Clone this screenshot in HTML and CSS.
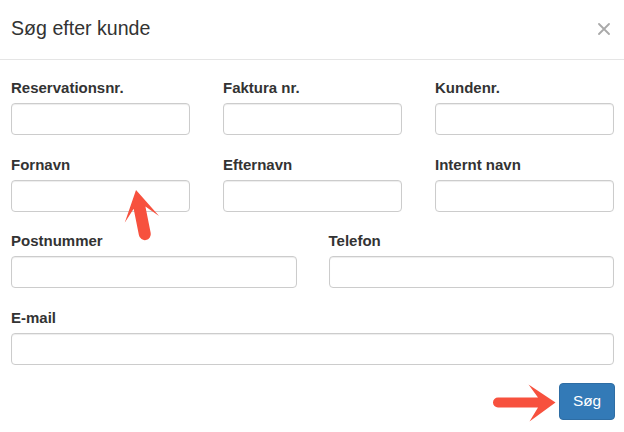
FILE: index.html
```html
<!DOCTYPE html>
<html lang="da">
<head>
<meta charset="utf-8">
<title>Søg efter kunde</title>
<link rel="stylesheet" href="styles.css">
</head>
<body>
<div class="modal">
  <div class="modal-header">
    <h4 class="modal-title">Søg efter kunde</h4>
    <button class="close" type="button" aria-label="Luk">
      <svg width="12" height="12" viewBox="0 0 12 12"><path d="M1 1 L11 11 M11 1 L1 11" stroke="#a9a9a9" stroke-width="1.8" stroke-linecap="round" fill="none"/></svg>
    </button>
  </div>
  <div class="modal-body">
    <div class="row row-3">
      <div class="form-group"><label>Reservationsnr.</label><input class="form-control" type="text"></div>
      <div class="form-group"><label>Faktura nr.</label><input class="form-control" type="text"></div>
      <div class="form-group"><label>Kundenr.</label><input class="form-control" type="text"></div>
    </div>
    <div class="row row-3">
      <div class="form-group"><label>Fornavn</label><input class="form-control" type="text"></div>
      <div class="form-group"><label>Efternavn</label><input class="form-control" type="text"></div>
      <div class="form-group"><label>Internt navn</label><input class="form-control" type="text"></div>
    </div>
    <div class="row row-2">
      <div class="form-group"><label>Postnummer</label><input class="form-control" type="text"></div>
      <div class="form-group"><label>Telefon</label><input class="form-control" type="text"></div>
    </div>
    <div class="row row-1">
      <div class="form-group last"><label>E-mail</label><input class="form-control" type="text"></div>
    </div>
  </div>
  <div class="modal-footer">
    <button class="btn btn-primary" type="button">Søg</button>
  </div>
  <svg class="annotations" width="624" height="432" viewBox="0 0 624 432">
    <g transform="translate(146,240) rotate(-101.3)">
      <path class="arrow" d="M33,-6 L6,-6 A6 6 0 0 0 6,6 L33,6 L21,17.5 L51,0 L21,-17.5 Z"/>
    </g>
    <path class="arrow" d="M538,397.5 L498,397.5 A5 5 0 0 0 498,407.5 L538,407.5 L529.5,421.5 L555.5,402.5 L528.5,384.5 Z"/>
  </svg>
</div>
</body>
</html>
```

FILE: styles.css
```css
* {
  box-sizing: border-box;
}

html, body {
  margin: 0;
  padding: 0;
  background: #ffffff;
}

body {
  font-family: "Liberation Sans", Arial, Helvetica, sans-serif;
  color: #333333;
  width: 624px;
  height: 432px;
  overflow: hidden;
}

.modal {
  position: relative;
  width: 624px;
  height: 432px;
  background: #ffffff;
}

.modal-header {
  display: flex;
  justify-content: space-between;
  align-items: center;
  padding: 14px 14px 16px 11px;
  border-bottom: 1px solid #e5e5e5;
}

.modal-title {
  margin: 0;
  font-size: 19.6px;
  font-weight: normal;
  line-height: 29px;
  color: #333333;
}

.close {
  display: flex;
  padding: 0;
  margin: 0;
  border: 0;
  background: transparent;
  cursor: pointer;
}

.modal-body {
  padding: 18px 10px 0 11px;
}

.row {
  display: grid;
  column-gap: 33px;
}

.row-3 {
  grid-template-columns: 1fr 1fr 1fr;
}

.row-2 {
  grid-template-columns: 1fr 1fr;
  column-gap: 32px;
}

.row-1 {
  grid-template-columns: 1fr;
}

.form-group {
  display: flex;
  flex-direction: column;
  margin-bottom: 19.5px;
}

.form-group.last {
  margin-bottom: 0;
}

.form-group label {
  display: block;
  font-size: 15px;
  font-weight: bold;
  line-height: 20px;
  margin-bottom: 5px;
  color: #333333;
}

.form-control {
  display: block;
  width: 100%;
  height: 32px;
  margin: 0;
  padding: 6px 11px;
  font-family: inherit;
  font-size: 15px;
  color: #555555;
  background: #ffffff;
  border: 1px solid #cccccc;
  border-radius: 4px;
  box-shadow: inset 0 1px 1px rgba(0, 0, 0, 0.075);
}

.modal-footer {
  display: flex;
  justify-content: flex-end;
  padding: 18px 9px 0 11px;
}

.btn {
  display: flex;
  align-items: center;
  justify-content: center;
  width: 56px;
  height: 37px;
  padding: 0;
  font-family: inherit;
  font-size: 15.4px;
  line-height: 20px;
  border-radius: 4px;
  cursor: pointer;
}

.btn-primary {
  color: #ffffff;
  background: #337ab7;
  border: 1px solid #2e6da4;
}

.annotations {
  position: absolute;
  left: 0;
  top: 0;
  pointer-events: none;
}

.arrow {
  fill: #f7513e;
}
```
